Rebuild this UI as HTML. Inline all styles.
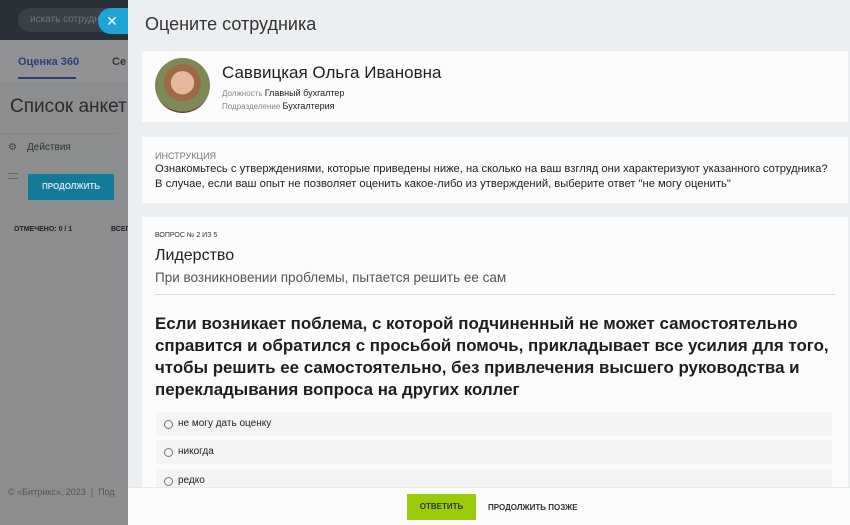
<!DOCTYPE html>
<html><head><meta charset="utf-8"><style>
*{margin:0;padding:0;box-sizing:border-box}
body{width:850px;height:525px;overflow:hidden;font-family:"Liberation Sans","DejaVu Sans",sans-serif;background:#8a8c8e;position:relative}
.left{position:absolute;left:0;top:0;width:128px;height:525px;background:#8b8d8f}
.top{position:absolute;left:0;top:0;width:128px;height:40px;background:#2a3038}
.search{position:absolute;left:18px;top:8px;width:110px;height:24px;border-radius:12px;background:#3a4048;color:#70767e;font-size:10px;line-height:24px;padding-left:12px;white-space:nowrap;overflow:hidden}
.close{position:absolute;left:98px;top:8px;width:32px;height:26px;border-radius:13px 0 0 13px;background:#1fa4d8;color:#fff;font-size:14px;line-height:26px;text-align:center;padding-right:4px}
.tabs{position:absolute;left:0;top:40px;width:128px;height:42px;background:#909294}
.panel{position:absolute;left:128px;top:0;width:722px;height:525px;background:#eceff2}
.card{position:absolute;left:14px;width:706px;background:#fbfbfb}
.foot{position:absolute;left:0;top:487px;width:722px;height:38px;background:#fbfbfb;border-top:1px solid #e6e8ea}
.ans{position:absolute;left:14px;width:676px;height:24px;background:#f3f4f5;font-size:10px;color:#222;line-height:24px;padding-left:22px}
.ans:before{content:"";position:absolute;left:8px;top:8px;width:7px;height:7px;border:1px solid #777;border-radius:50%}
</style></head><body>
<div class="left">
<div class="tabs"></div>
<div style="position:absolute;left:18px;top:56px;font-size:11px;font-weight:bold;color:#2c3e78">Оценка 360</div>
<div style="position:absolute;left:112px;top:56px;font-size:11px;font-weight:bold;color:#333">Се</div>
<div style="position:absolute;left:18px;top:77px;width:58px;height:2px;background:#2c3e78"></div>
<div style="position:absolute;left:10px;top:96px;font-size:19px;color:#2a2a2a;white-space:nowrap">Список анкет</div>
<div style="position:absolute;left:0;top:133px;width:118px;height:1px;background:#828486"></div>
<div style="position:absolute;left:8px;top:142px;font-size:10px;color:#444">⚙</div>
<div style="position:absolute;left:27px;top:142px;font-size:10px;color:#333">Действия</div>
<div style="position:absolute;left:8px;top:173px;width:10px;height:6px;border-top:1px solid #666;border-bottom:1px solid #666"></div>
<div style="position:absolute;left:28px;top:174px;width:86px;height:26px;background:#137a98;color:#cfe3ea;font-size:8px;font-weight:bold;line-height:26px;text-align:center">ПРОДОЛЖИТЬ</div>
<div style="position:absolute;left:14px;top:226px;font-size:7px;font-weight:bold;color:#222">ОТМЕЧЕНО: 0 / 1</div>
<div style="position:absolute;left:111px;top:226px;font-size:7px;font-weight:bold;color:#222">ВСЕГ</div>
<div style="position:absolute;left:8px;top:487px;font-size:9px;color:#555;white-space:nowrap">© «Битрикс», 2023 &nbsp;|&nbsp; Под</div>
</div>
<div class="top"><div class="search">искать сотрудника</div></div>
<div class="close">✕</div>
<div class="panel">
<div style="position:absolute;left:17px;top:14px;font-size:18px;color:#333">Оцените сотрудника</div>
<div class="card" style="top:51px;height:71px">
<div style="position:absolute;left:13px;top:7px;width:55px;height:55px;border-radius:50%;background:radial-gradient(circle at 50% 45%,#e5b89b 0 28%,#9c6a45 29% 45%,#7d8a55 46% 70%,#6f3a40 71%)"></div>
<div style="position:absolute;left:80px;top:12px;font-size:17px;color:#222">Саввицкая Ольга Ивановна</div>
<div style="position:absolute;left:80px;top:37px;font-size:8px;color:#888">Должность <span style="font-size:9px;color:#222">Главный бухгалтер</span></div>
<div style="position:absolute;left:80px;top:50px;font-size:8px;color:#888">Подразделение <span style="font-size:9px;color:#222">Бухгалтерия</span></div>
</div>
<div class="card" style="top:137px;height:66px">
<div style="position:absolute;left:13px;top:14px;font-size:9px;color:#777">ИНСТРУКЦИЯ</div>
<div style="position:absolute;left:13px;top:25px;font-size:11.2px;color:#222;line-height:15px;white-space:nowrap">Ознакомьтесь с утверждениями, которые приведены ниже, на сколько на ваш взгляд они характеризуют указанного сотрудника?<br>В случае, если ваш опыт не позволяет оценить какое-либо из утверждений, выберите ответ "не могу оценить"</div>
</div>
<div class="card" style="top:217px;height:270px">
<div style="position:absolute;left:13px;top:15px;font-size:7px;color:#333">ВОПРОС № 2 ИЗ 5</div>
<div style="position:absolute;left:13px;top:30px;font-size:16px;color:#222">Лидерство</div>
<div style="position:absolute;left:13px;top:53px;font-size:13.5px;color:#555">При возникновении проблемы, пытается решить ее сам</div>
<div style="position:absolute;left:13px;top:77px;width:680px;height:1px;background:#ddd"></div>
<div style="position:absolute;left:13px;top:96px;font-size:16.9px;font-weight:bold;color:#1e1e1e;line-height:22px;white-space:nowrap">Если возникает поблема, с которой подчиненный не может самостоятельно<br>справится и обратился с просьбой помочь, прикладывает все усилия для того,<br>чтобы решить ее самостоятельно, без привлечения высшего руководства и<br>перекладывания вопроса на других коллег</div>
<div class="ans" style="top:195px">не могу дать оценку</div>
<div class="ans" style="top:223px">никогда</div>
<div class="ans" style="top:252px">редко</div>
</div>
<div class="foot">
<div style="position:absolute;left:279px;top:6px;width:69px;height:26px;background:#9bcc0c;color:#2a3a00;font-size:8px;font-weight:bold;line-height:26px;text-align:center">ОТВЕТИТЬ</div>
<div style="position:absolute;left:360px;top:15px;font-size:8px;font-weight:bold;color:#333">ПРОДОЛЖИТЬ ПОЗЖЕ</div>
</div>
</div>
</body></html>
